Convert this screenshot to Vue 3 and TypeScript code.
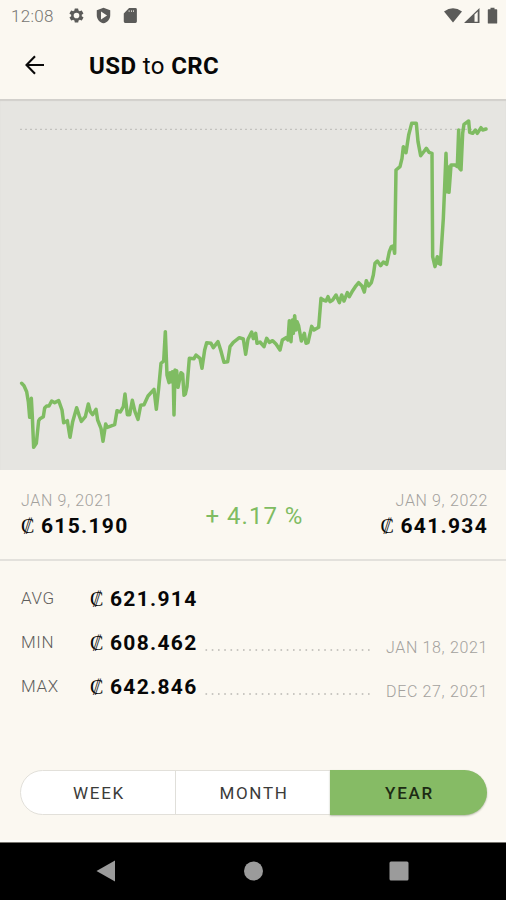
<script setup lang="ts">
import { ref } from 'vue'

interface Stat {
  label: string
  value: string
  date?: string
}

const stats: Stat[] = [
  { label: 'AVG', value: '621.914' },
  { label: 'MIN', value: '608.462', date: 'JAN 18, 2021' },
  { label: 'MAX', value: '642.846', date: 'DEC 27, 2021' },
]

const ranges = ['WEEK', 'MONTH', 'YEAR'] as const
const active = ref<(typeof ranges)[number]>('YEAR')

// Rate history, three chart units per pixel
const history: string = [
  '65,1150 72,1157 80,1175 85,1205 89,1252 94,1195 97,1250 101,1342 109,1330 116,1262 120,1256 130,1250 134,1224',
  '140,1218 147,1218 155,1203 164,1208 176,1202 186,1230 191,1268 202,1262 210,1312 218,1265 230,1223 238,1248',
  '244,1264 256,1250 265,1212 271,1235 278,1244 288,1228 293,1260 303,1285 309,1324 317,1272 322,1282 344,1274',
  '351,1232 361,1236 370,1220 375,1182 382,1244 389,1244 397,1201 405,1235 414,1258 422,1216 432,1214 444,1188',
  '462,1168 469,1228 476,1165 483,1090 491,1083 496,995 501,1125 507,1148 510,1118 514,1145 517,1115 520,1150',
  '522,1245 525,1110 528,1150 530,1112 534,1162 543,1118 548,1122 552,1186 556,1182 561,1160 568,1075 582,1076',
  '588,1065 600,1075 606,1105 614,1050 620,1028 633,1030 640,1043 654,1025 662,1050 672,1087 683,1085 690,1040',
  '700,1027 718,1013 730,1017 737,1063 744,1018 755,996 760,1016 767,1000 771,1030 780,1026 792,1040 800,1015',
  '808,1027 818,1022 828,1032 840,1050 847,1020 858,1013 864,1020 868,962 873,1025 877,960 880,1000 884,947',
  '888,990 891,965 896,978 904,1023 913,1000 918,1030 924,1028 935,979 942,990 956,982 963,895 970,900 978,903',
  '984,890 990,905 998,900 1008,885 1018,908 1025,885 1032,903 1042,878 1048,890 1058,872 1066,860 1076,848',
  '1086,858 1093,876 1099,842 1106,858 1114,848 1120,825 1125,790 1132,783 1142,797 1150,786 1160,793 1168,755',
  '1174,740 1180,738 1184,760 1188,510 1200,500 1206,475 1210,440 1218,458 1226,405 1235,370 1249,370 1254,425',
  '1262,467 1273,453 1279,445 1287,457 1296,460 1298,770 1305,800 1312,770 1316,790 1321,793 1330,655 1334,560',
  '1338,460 1340,520 1342,575 1344,500 1347,577 1353,495 1365,495 1372,500 1376,390 1379,505 1383,510 1388,400',
  '1392,373 1406,363 1409,397 1418,400 1426,390 1432,400 1443,383 1448,390 1458,387',
].join(' ')
</script>

<template>
  <main class="screen">
    <header class="status">
      <span class="clock">12:08</span>
      <svg class="s-icon" viewBox="0 0 24 24"><path fill-rule="evenodd" d="M19.4 13a7.8 7.8 0 0 0 0-2l2.1-1.6a.5.5 0 0 0 .1-.7l-2-3.4a.5.5 0 0 0-.6-.2l-2.5 1a7.300 7.300 0 0 0-1.700-1l-.4-2.600a.5.5 0 0 0-.5-.5h-4a.5.5 0 0 0-.5.5L9 5.100a7.300 7.300 0 0 0-1.700 1l-2.500-1a.5.5 0 0 0-.6.2l-2 3.400a.5.5 0 0 0 .1.7L4.500 11a7.800 7.800 0 0 0 0 2l-2.100 1.600a.5.5 0 0 0-.1.7l2 3.400c.1.2.4.3.6.2l2.500-1a7.300 7.300 0 0 0 1.700 1l.4 2.600c0 .3.2.5.5.5h4c.3 0 .5-.2.5-.5l.4-2.600a7.300 7.300 0 0 0 1.700-1l2.500 1c.2.1.5 0 .6-.2l2-3.400a.5.5 0 0 0-.1-.7zM12 16a4 4 0 1 1 0-8 4 4 0 0 1 0 8z" /></svg>
      <svg class="s-icon shield" viewBox="0 0 24 24"><path fill-rule="evenodd" d="M12 1L2.500 4.500v7c0 5.500 4 10 9.500 11.500 5.500-1.500 9.500-6 9.500-11.500v-7zM8.500 6.500l8.500 5.500-8.500 5.500z" /></svg>
      <svg class="s-icon card" viewBox="0 0 24 24"><path fill-rule="evenodd" d="M10 1.500h9a2 2 0 0 1 2 2v17a2 2 0 0 1-2 2H4.500a2 2 0 0 1-2-2V9zM9.500 4.500V7h1V4.500zm3.200 0V7h1V4.500zm3.200 0V7h1V4.500z" /></svg>
      <span class="grow"></span>
      <svg class="signals" viewBox="0 0 56 18">
        <path d="M1 4.600Q10 -2 19 4.600L10 15.500z" />
        <path fill-rule="evenodd" d="M21 16L36.500 1v15zM31.500 7.500V14.800h3.200V4.500z" />
        <path d="M45.500 2.200h2V.800h4v1.400h2a.7.700 0 0 1 .7.700v13a.7.700 0 0 1-.7.700h-8a.7.700 0 0 1-.7-.7v-13a.7.700 0 0 1 .7-.7z" />
      </svg>
    </header>

    <div class="appbar">
      <svg class="back" viewBox="0 0 20 20"><path d="M19 10H2M10 1.200L1.500 10l8.500 8.800" /></svg>
      <h1 class="title"><b>USD</b> to <b>CRC</b></h1>
    </div>

    <section class="chart">
      <svg viewBox="0 297 1518 1113">
        <line class="guide" x1="61" y1="388" x2="1458" y2="388" />
        <polyline class="curve" :points="history" />
      </svg>
    </section>

    <section class="summary">
      <div class="point">
        <span class="date">JAN 9, 2021</span>
        <span class="amount"><i class="colon">₡</i>615.190</span>
      </div>
      <div class="change">+ 4.17 %</div>
      <div class="point right">
        <span class="date">JAN 9, 2022</span>
        <span class="amount"><i class="colon">₡</i>641.934</span>
      </div>
    </section>

    <section class="stats">
      <div v-for="s in stats" :key="s.label" class="stat">
        <span class="label">{{ s.label }}</span>
        <span class="amount"><i class="colon">₡</i>{{ s.value }}</span>
        <template v-if="s.date">
          <svg class="leader" viewBox="0 0 165 2"><line x1="0.500" y1="1" x2="165" y2="1" /></svg>
          <span class="date">{{ s.date }}</span>
        </template>
      </div>
    </section>

    <div class="ranges">
      <button v-for="r in ranges" :key="r" class="range" :class="{ on: r === active }" @click="active = r">{{ r }}</button>
    </div>

    <nav class="nav">
      <svg viewBox="0 0 506 58">
        <path d="M96.500 28L115 17.500v21z" />
        <circle cx="253.500" cy="28" r="9.500" />
        <rect x="389.500" y="18.500" width="19" height="19" rx="1.500" />
      </svg>
    </nav>
  </main>
</template>

<style>
body {
  margin: 0;
  background: #fbf8f1;
}
</style>

<style scoped>
.screen {
  width: 506px;
  height: 900px;
  display: flex;
  flex-direction: column;
  overflow: hidden;
  background: #fbf8f1;
  color: #070707;
  font-family: Roboto, "Liberation Sans", sans-serif;
}
.status {
  height: 31px;
  flex: none;
  display: flex;
  align-items: center;
  padding: 0 7px 0 11px;
}
.clock {
  width: 57px;
  font-size: 17px;
  line-height: 32px;
  padding-top: 1px;
  color: #777673;
  font-weight: 300;
  letter-spacing: 0.3px;
}
.s-icon {
  width: 17px;
  height: 17px;
  fill: #5b5b59;
}
.shield,
.card {
  margin-left: 10px;
}
.grow {
  flex: 1;
}
.signals {
  width: 56px;
  height: 18px;
  fill: #5b5b59;
}
.appbar {
  height: 68px;
  flex: none;
  box-sizing: border-box;
  display: flex;
  align-items: center;
  padding-left: 25px;
}
.back {
  width: 20px;
  height: 20px;
  fill: none;
  stroke: #090909;
  stroke-width: 2.1;
}
.title {
  margin: 2px 0 0 44px;
  font-size: 24px;
  line-height: 28px;
  font-weight: 400;
  letter-spacing: 0.4px;
}
.title b {
  font-weight: 700;
}
.chart {
  height: 371px;
  flex: none;
  background: #e6e5e1;
  box-shadow: inset 0 2px 1px #d2d0cc;
}
.chart svg {
  display: block;
  width: 506px;
  height: 371px;
}
.guide {
  stroke: #b2b1ad;
  stroke-width: 4;
  stroke-dasharray: 4 11;
}
.curve {
  fill: none;
  stroke: #7fbc62;
  stroke-width: 10.5;
  stroke-linejoin: round;
  stroke-linecap: round;
}
.summary {
  height: 91px;
  flex: none;
  box-sizing: border-box;
  display: flex;
  justify-content: space-between;
  padding: 21px 18px 0 21px;
  border-bottom: 2px solid #e3e1dc;
}
.point {
  width: 130px;
  display: flex;
  flex-direction: column;
}
.right {
  align-items: flex-end;
}
.date {
  font-size: 16px;
  line-height: 20px;
  font-weight: 300;
  letter-spacing: 0.65px;
  color: #a3a19d;
  white-space: nowrap;
}
.amount {
  display: flex;
  align-items: center;
  font-size: 21px;
  line-height: 30px;
  font-weight: 700;
  letter-spacing: 1.3px;
  white-space: nowrap;
}
.colon {
  width: 20px;
  font-family: "Liberation Serif", serif;
  font-style: normal;
  font-weight: 400;
  font-size: 20px;
  letter-spacing: 0;
}
.change {
  padding-top: 10px;
  font-size: 24px;
  line-height: 30px;
  letter-spacing: 1px;
  color: #7fbc62;
}
.stats {
  height: 209px;
  flex: none;
  box-sizing: border-box;
  padding: 15px 18px 0 21px;
}
.stat {
  height: 44px;
  display: flex;
  align-items: center;
}
.stat .amount {
  padding-top: 1px;
}
.label {
  width: 69px;
  font-size: 17px;
  font-weight: 300;
  letter-spacing: 0.6px;
  color: #5f5e5c;
}
.leader {
  width: 165px;
  height: 2px;
  margin: 15px 0 0 8px;
}
.leader line {
  stroke: #b9b7b2;
  stroke-width: 1.4;
  stroke-dasharray: 1.6 4.65;
}
.stat .date {
  margin: 11px 0 0 auto;
}
.ranges {
  height: 45px;
  flex: none;
  box-sizing: border-box;
  display: flex;
  margin: 0 19px 0 20px;
  border: 1px solid #e2e0da;
  border-radius: 23px;
  background: #fff;
}
.range {
  width: 155px;
  flex: none;
  height: 43px;
  padding: 0 0 0 2px;
  border: 0;
  border-right: 1px solid #e0dfda;
  background: transparent;
  color: #3b3b39;
  font-family: inherit;
  font-size: 17px;
  letter-spacing: 1.7px;
}
.range.on {
  width: 157px;
  height: 45px;
  margin: -1px;
  border: 0;
  border-radius: 0 23px 23px 0;
  background: #86bb65;
  color: #1d2b14;
  box-shadow: 0 1px 2px #b5b9a9;
  font-weight: 500;
}
.nav {
  height: 58px;
  flex: none;
  margin-top: auto;
  background: #000;
  border-top: 1px solid #77756f;
  box-sizing: border-box;
  box-shadow: 0 -2px 0 #fffefb;
}
.nav svg {
  display: block;
  width: 506px;
  height: 58px;
  fill: #9b9b9b;
}
</style>
